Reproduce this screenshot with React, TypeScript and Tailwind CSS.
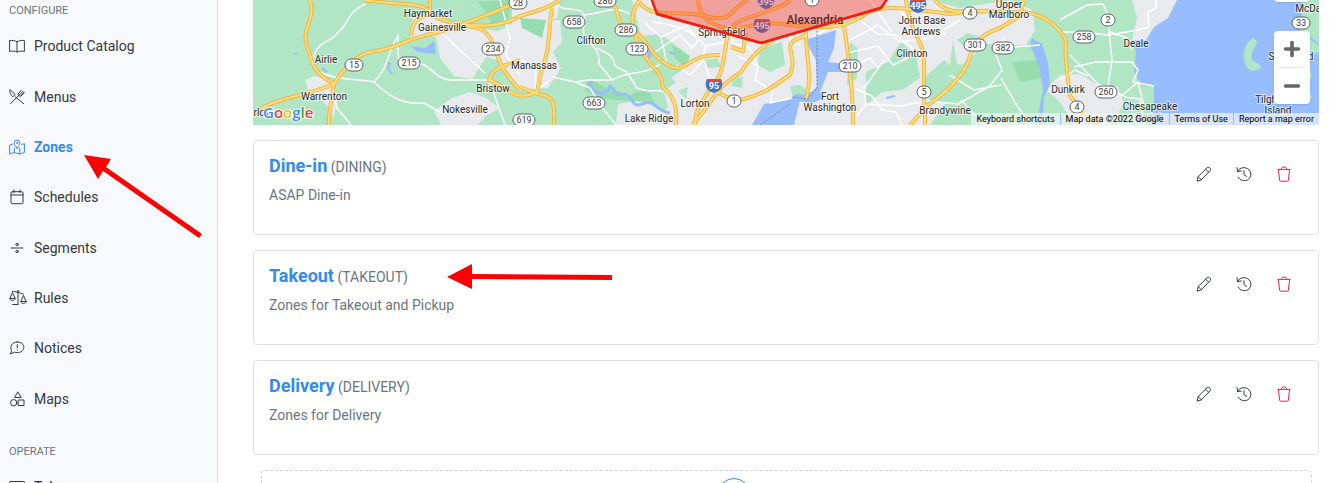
import type { ReactNode } from "react";
import { Minus, Plus } from "lucide-react";

const Icon = ({ children, size = 16 }: { children: ReactNode; size?: number }) => (
  <svg
    width={size}
    height={size}
    viewBox="0 0 16 16"
    fill="none"
    stroke="currentColor"
    strokeLinecap="round"
    strokeLinejoin="round"
    className="shrink-0"
    aria-hidden="true"
  >
    {children}
  </svg>
);

const BookIcon = () => (
  <Icon>
    <path d="M8 3.8C6.3 2.6 3 2.1.6 2.6v10.8C3 12.9 6.3 13 8 14c1.7-1 5-1.1 7.4-.6V2.6C13 2.1 9.7 2.6 8 3.8V14" />
  </Icon>
);

const MenusIcon = () => (
  <Icon>
    <path d="M.8 1c-.3 2.500.7 4.700 3 6.800l2-2zM6 7.700l8.700 7M10.500 5.700 1.600 14.600M9.300 4.600c-.5 1.600.8 3.100 2.600 2.500l3.300-3.300M9.300 4.600l3-3.400M11 5.300l3-3" />
    <path d="M12 6.200 15 3.100" strokeWidth=".7" />
  </Icon>
);

const ZonesIcon = () => (
  <Icon>
    <path d="M8 9.200C6.500 7.300 5.200 5.600 5.200 3.900a2.800 2.800 0 0 1 5.600 0C10.800 5.600 9.500 7.300 8 9.200z" />
    <circle cx="8" cy="3.900" r=".6" />
    <path d="M3.800 5 .6 6.200v8.800l4.700-1.500 5.400 1.500 4.700-1.500V4.700l-2.700.7M5.300 9v4.500M10.700 9v6" />
  </Icon>
);

const SchedulesIcon = () => (
  <Icon>
    <rect x="2" y="2.700" width="12" height="12" rx="1.300" />
    <path d="M2 6h12M5 1v2.400M11 1v2.400" />
  </Icon>
);

const SegmentsIcon = () => (
  <Icon>
    <path d="M2 8h12" />
    <circle cx="8" cy="4.500" r="1.200" />
    <circle cx="8" cy="11.500" r="1.200" />
  </Icon>
);

const RulesIcon = () => (
  <svg width="18" height="16" viewBox="0 0 18 16" fill="none" stroke="currentColor" strokeLinejoin="round" className="-mr-0.5 shrink-0" aria-hidden="true">
    <path d="M3 1.600c2-.7 3.500.5 6 .8 2 .3 3.200 1 5.800 2M9 2v12.500M3.300 14.500H9.500" />
    <circle cx="9" cy="1.500" r="1" />
    <path d="M3.500 2.500.8 8.500h5.400zM.8 8.500c.5 2.700 4.900 2.700 5.400 0M14.500 5.500l-2.700 6h5.400zM11.800 11.500c.5 2.700 4.900 2.700 5.400 0" />
  </svg>
);

const NoticesIcon = () => (
  <Icon>
    <path d="M8.300 2c3.800 0 6.500 2.200 6.500 5.300s-2.700 5.300-6.500 5.300c-1 0-2-.2-2.900-.5L1.500 14l1.100-3.500C.6 7 2.600 2 8.300 2z" />
    <path d="M8.300 4.600v3.400M8.300 10v.2" />
  </Icon>
);

const MapsIcon = () => (
  <Icon>
    <path d="M9 1.200 12.200 6.500H5.900z" />
    <circle cx="4.700" cy="11.700" r="3.200" />
    <path d="M9.500 9h5.500v5.500H9.500z" />
  </Icon>
);

const TabsIcon = () => (
  <Icon>
    <rect x=".6" y="2.500" width="15" height="11" rx="1" />
  </Icon>
);

const EditIcon = () => (
  <Icon>
    <path d="M1.200 14.800l.9-4.200L11 1.800c1.900-1.700 4.700 1 3.100 3L5.300 13.700zM2.100 10.600l3.200 3.100M9.600 3.200l3.100 3.100" />
  </Icon>
);

const HistoryIcon = () => (
  <Icon>
    <path d="M1.700 5.300C4.500-1 14.900 1.200 14.900 8.300c0 7.200-9.800 8.700-12.700 2.800M1 1.600l.5 4 3.900-.6M8 4.700v3.900l2.700 1.900" />
  </Icon>
);

const TrashIcon = () => (
  <Icon>
    <path d="M2.400 3.400l1.200 10.800c.1.700.5 1 1.100 1h6.600c.6 0 1-.3 1.100-1l1.200-10.800M1.800 3.400h12.400M5.300 3.200C5.500 1.600 6.200 1 8 1s2.500.6 2.700 2.200" />
  </Icon>
);

const navItems = [
  { label: "Product Catalog", icon: <BookIcon /> },
  { label: "Menus", icon: <MenusIcon /> },
  { label: "Zones", icon: <ZonesIcon />, active: true },
  { label: "Schedules", icon: <SchedulesIcon /> },
  { label: "Segments", icon: <SegmentsIcon /> },
  { label: "Rules", icon: <RulesIcon /> },
  { label: "Notices", icon: <NoticesIcon /> },
  { label: "Maps", icon: <MapsIcon /> },
];

const zones = [
  { name: "Dine-in", code: "DINING", description: "ASAP Dine-in" },
  { name: "Takeout", code: "TAKEOUT", description: "Zones for Takeout and Pickup" },
  { name: "Delivery", code: "DELIVERY", description: "Zones for Delivery" },
];

const urban = [
  "M410 38L413 17L428 15L450 20L470 27L498 31L520 22L560 20L562 42L553 52L561 68L548 88L520 90L517 84L504 67L498 60L486 57L472 79L454 76L440 58L436 37L425 34z",
  "M305 80L315 76L331 80L337 96L334 118L329 108L318 96L309 92z",
  "M452 98L470 92L486 98L500 108L486 116L478 125H441L434 111z",
  "M494 0H560L557 18L520 30L498 22z",
  "M632 0H930L960 8L1010 0L1032 10L1035 30L1026 45L985 44L965 62L948 80L955 125H650L668 107L664 92L676 82L664 71L652 48L640 32z",
  "M618 104L642 100L668 112L680 125H616z",
  "M1060 75L1080 74L1096 84L1118 87L1124 105L1110 125H1074L1060 102L1046 90z",
  "M1240 98L1262 94L1286 100V125H1240z",
];

const parks = [
  "M466 0H512V24L488 28L466 26L462 12z",
  "M866 72L888 62L901 42L916 55L920 78L902 90L882 92L866 105z",
  "M922 80L944 60L950 65L953 40L957 64L976 66L1000 63L1005 90L990 125H930L945 103L924 98z",
  "M640 36L660 34L685 52L682 70L665 82L650 62z",
  "M760 48L782 42L785 65L770 72L758 65z",
  "M790 86L800 85L815 96L810 103L793 99z",
  "M957 40L968 33L984 38L985 51L970 52z",
  "M848 50L851 42L858 49L857 78L847 86z",
  "M678 91L688 87L686 99z",
  "M733 78L743 77L742 88L731 86z",
  "M430 0L450 2L446 12L432 10z",
  "M704 60L718 58L721 67L708 68z",
];

const darkParks = [
  "M478 2L510 0L509 18L492 26L486 12z",
  "M520 18L546 20L542 38L522 28z",
  "M588 78L606 88L630 95L647 88L655 103L620 100L596 98L585 90z",
  "M1012 62L1040 60L1042 78L1020 82z",
  "M672 45L690 56L686 68L676 59z",
];

const waters = [
  "M805 40L836 30L834 48L828 62L852 65L850 72L828 72L820 92L824 98L811 104L800 101L794 125H752L764 104L788 100L796 94L808 95L817 87L816 60z",
  "M1319 0V125H1149L1154 110V85L1142 86L1134 72L1136 52L1133 42L1140 24L1133 0z",
  "M1032 38L1042 44L1048 62L1050 84L1044 98L1042 125H1036L1043 90L1039 66L1030 45z",
  "M410 46L425 48L434 41L436 54L418 52z",
  "M647 45L652 56L648 60z",
];

const highways = [
  "M310 0C316 20 301 28 307 46S313 70 326 79L334 84C333 98 328 110 329 125",
  "M253 115C270 98 300 98 334 84C348 62 360 54 371 52C398 49 405 38 440 32C475 19 497 13 520 0",
  "M364 0C400 6 423 0 434 16C450 26 470 24 483 30C500 44 490 60 520 90",
  "M411 36C413 16 420 19 430 14V0",
  "M452 24C484 26 500 28 520 16C545 9 550 6 560 0",
  "M552 8C548 30 551 48 541 72L537 92C512 104 504 83 489 80C493 65 510 65 520 60",
  "M520 87L538 94C557 96 554 108 554 125",
  "M612 0C622 20 616 25 632 31C645 35 650 55 666 64C687 77 684 54 720 55",
  "M640 0C630 12 631 24 636 37C637 48 641 50 652 66C668 80 657 86 668 92C677 102 677 116 676 125",
  "M640 3C653 20 678 9 705 16C733 24 728 10 748 0",
  "M698 0C701 26 718 24 732 31C754 23 771 22 790 25C825 29 840 28 860 18C878 1 914 10 950 14C989 7 1005 14 1024 12C1044 14 1060 28 1066 40C1064 60 1069 84 1070 96L1080 108C1080 118 1092 121 1100 125",
  "M790 0C777 13 740 15 730 29C722 48 727 75 710 88C704 103 696 104 695 125",
  "M710 88C725 97 729 99 744 99C768 93 781 80 790 75C800 50 776 45 805 36",
  "M731 47L743 51L746 33M692 125C712 105 714 88 740 73C752 55 764 45 774 40",
  "M806 30C805 52 813 76 806 99M844 26C849 58 853 98 853 125",
  "M906 0C909 28 920 38 923 52C926 68 922 90 925 107V125M910 125L928 105C950 90 968 70 970 55C978 38 985 33 1000 28L1020 16L1024 0",
  "M935 0C950 18 965 8 985 12",
];

const localRoads = [
  "M366 4C345 12 352 24 331 39C315 46 309 58 317 71C340 82 357 78 374 82C390 65 385 58 398 35C398 58 396 65 410 66C430 57 430 78 450 80L489 80L505 125",
  "M374 82C389 96 402 105 424 103L440 112M489 77L497 69L520 63M438 30L459 49L485 73M331 80L337 108L351 125",
  "M500 0L510 38L506 55L520 75M520 60L535 65L536 90L550 80",
  "M550 0C568 18 584 0 585 22C577 45 601 40 599 64L612 80C627 70 644 76 660 64",
  "M584 15C610 12 613 5 630 14M597 48C627 62 602 62 627 72L637 88C650 94 652 88 664 92",
  "M553 77L575 82L590 88L600 105L616 125M575 82L588 80L612 80",
  "M645 23L661 37L685 26L706 46L734 40M661 37L667 64M652 22C680 25 690 30 706 46L702 60",
  "M655 52L680 35L692 48L711 25M691 20L728 41L750 48L758 66",
  "M676 65L690 75L704 60L714 92M738 56L758 66L755 80L773 91L770 103L792 98",
  "M790 40L800 45M812 37L831 27L847 24M850 40L878 25L900 42L930 38L960 20",
  "M860 20L878 34L896 35L917 52M870 0L892 32M900 10L920 30L946 34",
  "M847 53L878 46L893 65L920 52M884 60L864 88L866 104L850 125M866 104L901 106L926 101M926 101L958 104L990 86L1002 70L996 55L1004 38",
  "M950 75L974 90L1001 85M961 100L985 125M1001 78L1016 104L1030 125M1000 48L1040 45",
  "M853 66L870 58L878 68M854 88L872 96L882 110L896 112L902 125",
  "M1060 20L1087 5L1103 4L1110 20L1109 32L1112 60L1108 86M1060 32L1080 32L1108 35L1138 30L1149 27L1148 12L1156 8V0",
  "M1070 55L1098 84M1074 67L1096 62L1132 62L1138 70L1133 82L1154 86M1120 97L1138 82L1144 106M1098 84L1124 96",
  "M1060 80L1075 70L1088 76M1124 97L1140 99L1144 125M1110 32L1127 38L1132 50",
];

// [x, y, label]
const routes: [number, number, string][] = [
  [354, 65, "15"], [409, 63, "215"], [493, 49, "234"], [518, 3, "28"], [574, 22, "658"], [605, 1, "286"],
  [626, 30, "286"], [637, 49, "123"], [594, 103, "663"], [524, 120, "619"], [734, 101, "1"], [850, 66, "210"],
  [970, 13, "4"], [975, 45, "301"], [1003, 48, "382"], [924, 92, "5"], [1108, 20, "2"], [1084, 37, "258"],
  [1106, 92, "260"], [1077, 107, "4"], [1301, 23, "33"], [812, 0, "1"],
];

const interstates: [number, number, string][] = [
  [714, 85, "95"], [762, 25, "495"], [766, 1, "395"], [918, 5, "495"],
];

const places: [number, number, string][] = [
  [428, 17, "Haymarket"], [442, 31, "Gainesville"], [326, 63, "Airlie"], [324, 100, "Warrenton"],
  [493, 92, "Bristow"], [465, 113, "Nokesville"], [591, 44, "Clifton"], [534, 69, "Manassas"],
  [695, 107, "Lorton"], [649, 122, "Lake Ridge"], [722, 36, "Springfield"],
  [922, 24, "Joint Base"], [921, 35, "Andrews"], [912, 57, "Clinton"], [830, 100, "Fort"], [830, 111, "Washington"],
  [945, 114, "Brandywine"], [1009, 8, "Upper"], [1009, 18, "Marlboro"], [1136, 47, "Deale"],
  [1068, 93, "Dunkirk"], [1150, 110, "Chesapeake"], [1150, 121, "Beach"], [1291, 60, "Sherwood"],
  [1276, 103, "Tilghman"], [1278, 114, "Island"], [1316, 12, "McDaniel"], [256, 116, "Marlow"],
];

const MapDrawing = () => (
  <svg viewBox="253 0 1066 125" preserveAspectRatio="xMinYMid slice" className="h-full w-full" aria-label="Zone map">
    <rect x="253" width="1066" height="125" fill="#b0e6c4" />
    <g fill="#e8eaed">{urban.map((d) => <path key={d} d={d} />)}</g>
    <g fill="#aee5c2">{parks.map((d) => <path key={d} d={d} />)}</g>
    <g fill="#95dcae">{darkParks.map((d) => <path key={d} d={d} />)}</g>
    <g fill="#98bdff">{waters.map((d) => <path key={d} d={d} />)}</g>
    <path d="M1132 0H1177L1168 18L1154 27L1146 40L1132 40L1137 18z" fill="#e8eaed" />
    <path d="M589 80C593 95 604 98 610 86C619 92 611 96 625 94C636 100 630 109 645 103C655 100 656 111 670 113" fill="none" stroke="#98bdff" strokeWidth="3" />
    <path d="M1254 38C1240 44 1242 66 1251 71L1261 69L1260 65L1252 60C1249 51 1258 46 1257 42z" fill="#b0e6c4" />
    <path d="M1302 0H1319V52L1308 56L1312 78L1303 76L1312 98L1298 104L1305 88L1297 70L1305 48L1296 40L1302 24z" fill="#b0e6c4" />
    <path d="M1310 38L1319 45M1306 63L1319 58M1310 85L1319 92" fill="none" stroke="#98bdff" strokeWidth="2" />
    <path d="M386 62l4 2-2 4 4 6M322 68l5 4M341 74l-2 5M295 53l2 1M886 98l9-2M670 52l6 3" fill="none" stroke="#98bdff" strokeWidth="2" />
    <g fill="none" stroke="#fff" strokeWidth="1.500" strokeLinejoin="round">
      {localRoads.map((d) => <path key={d} d={d} />)}
    </g>
    <g fill="none" stroke="#f3b63a" strokeWidth="4" strokeLinejoin="round">
      {highways.map((d) => <path key={d} d={d} />)}
    </g>
    <g fill="none" stroke="#fddc80" strokeWidth="2" strokeLinejoin="round">
      {highways.map((d) => <path key={d} d={d} />)}
    </g>
    <path d="M817 20V88L808 99L792 97M760 125L790 104" fill="none" stroke="#7c8497" strokeDasharray="2 1.500" />
    {/* Delivery zone outline */}
    <path d="M650 -5L657 14L761 43L881 8L890 -5z" fill="#ff2a18" fillOpacity=".38" stroke="#f41e0b" strokeWidth="2.500" />
    <g fontFamily="Roboto, sans-serif" fontSize="9" textAnchor="middle">
      {routes.map(([x, y, label], i) => (
        <g key={i}>
          <rect x={x - 5 - label.length * 2} y={y - 6} width={10 + label.length * 4} height="12" rx="6" fill="#fff" stroke="#5f6368" />
          <text x={x} y={y + 3} fill="#3c4043">{label}</text>
        </g>
      ))}
      {interstates.map(([x, y, label], i) => (
        <g key={i}>
          <path d={`M${x - 7} ${y - 6}h14c3 6 1 12-7 14c-8-2-10-8-7-14z`} fill={y === 85 || x === 918 ? "#3f74c8" : "#7a5a94"} />
          <path d={`M${x - 7} ${y - 6}h14v2h-14z`} fill="#d64b45" />
          <text x={x} y={y + 4} fill={y === 85 || x === 918 ? "#fff" : "#f5b5b5"} fontWeight="700">{label}</text>
        </g>
      ))}
    </g>
    <g fontFamily="Roboto, sans-serif" fontSize="10" textAnchor="middle" fill="#25282c" stroke="#fff" strokeOpacity=".6" strokeWidth="2" paintOrder="stroke">
      {places.map(([x, y, label]) => <text key={label} x={x} y={y}>{label}</text>)}
    </g>
    <text x="815" y="24" fontFamily="Roboto, sans-serif" fontSize="12" fontWeight="500" textAnchor="middle" fill="#5a2a2a">Alexandria</text>
    <path d="M657 14L761 43L881 8" fill="none" stroke="#f41e0b" strokeWidth="2.500" />
    <text x="263" y="118" fontFamily="'Open Sans', sans-serif" fontSize="15" fontWeight="600" stroke="#fff" strokeWidth="2" paintOrder="stroke">
      <tspan fill="#4285f4">G</tspan><tspan fill="#ea4335">o</tspan><tspan fill="#fbbc04">o</tspan><tspan fill="#4285f4">g</tspan><tspan fill="#34a853">l</tspan><tspan fill="#ea4335">e</tspan>
    </text>
  </svg>
);

const ZoneMap = () => (
  <div className="relative h-[125px] overflow-hidden bg-[#b0e6c4]">
    <MapDrawing />
    <div className="absolute -top-9 right-[9px] h-[38px] w-9 rounded-sm bg-white shadow" />
    <div className="absolute top-[31px] right-[9px] flex w-9 flex-col items-center rounded-sm bg-white text-[#666] shadow">
      <button type="button" aria-label="Zoom in" className="flex h-9 w-full items-center justify-center">
        <Plus size={22} strokeWidth={4} />
      </button>
      <span className="h-px w-7 bg-[#e6e6e6]" />
      <button type="button" aria-label="Zoom out" className="flex h-9 w-full items-center justify-center">
        <Minus size={22} strokeWidth={4} />
      </button>
    </div>
    <div className="absolute right-0 bottom-0 flex h-3 divide-x divide-[#98bdff] bg-[#f5f5f5]/70 text-[9px] leading-3 text-black">
      <button type="button" className="px-[5px]">Keyboard shortcuts</button>
      <span className="px-[5px]">Map data ©2022 Google</span>
      <a href="#terms" className="px-[5px]">Terms of Use</a>
      <a href="#report" className="px-[5px]">Report a map error</a>
    </div>
  </div>
);

const Sidebar = () => (
  <aside className="w-[218px] shrink-0 border-r border-[#dee2e6] bg-[#f8f9fc] text-sm text-[#343a40]">
    <h2 className="h-[21px] px-[9px] text-[11px] leading-[21px] text-[#6c757d]">CONFIGURE</h2>
    <nav className="grid h-[403px] grid-rows-8 px-[9px]">
      {navItems.map(({ label, icon, active }) => (
        <a key={label} href="#" className={active ? "flex items-center gap-[9px] font-bold text-[#318ceb]" : "flex items-center gap-[9px]"}>
          {icon}
          {label}
        </a>
      ))}
    </nav>
    <h2 className="mt-[17px] h-[21px] px-[9px] text-[11px] leading-[21px] text-[#6c757d]">OPERATE</h2>
    <a href="#" className="flex h-[50px] items-center gap-[9px] px-[9px]">
      <TabsIcon />
      Tabs
    </a>
  </aside>
);

const ZoneCard = ({ name, code, description }: { name: string; code: string; description: string }) => (
  <article className="flex h-[95px] justify-between rounded border border-[#dee2e6] px-[15px] pt-[11px]">
    <div className="text-sm text-[#6c757d]">
      <h3 className="h-[27px] leading-[27px]">
        <a href="#" className="text-lg font-bold text-[#318ceb]">{name}</a> ({code})
      </h3>
      <p className="mt-1.5 leading-5">{description}</p>
    </div>
    <div className="flex h-11 items-center gap-6 pr-[11px] text-[#343a40]">
      <button type="button" aria-label={`Edit ${name}`}><EditIcon /></button>
      <button type="button" aria-label={`History of ${name}`}><HistoryIcon /></button>
      <button type="button" aria-label={`Delete ${name}`} className="text-[#e0244f]"><TrashIcon /></button>
    </div>
  </article>
);

export default function App() {
  return (
    <div className="relative flex h-screen overflow-hidden bg-white font-[Roboto,sans-serif]">
      <Sidebar />
      <main className="min-w-0 flex-1 pr-[11px] pl-[35px]">
        <ZoneMap />
        <section className="mt-[15px] flex flex-col gap-[15px]">
          {zones.map((zone) => <ZoneCard key={zone.code} {...zone} />)}
          <button type="button" aria-label="Add zone" className="mr-[7px] ml-2 flex h-20 justify-center rounded border border-dashed border-[#ced4da] pt-[7px]">
            <span className="mr-[106px] flex size-8 items-center justify-center rounded-full border border-[#318ceb] text-[#318ceb]">
              <Plus size={18} />
            </span>
          </button>
        </section>
      </main>

      {/* Callout arrows */}
      <svg width="120" height="86" viewBox="0 0 120 86" className="pointer-events-none absolute top-[154px] left-[83px]" fill="#f00" aria-hidden="true">
        <path d="M1 1L28 5L23 13L119 80L116 84L20 17L15 25z" />
      </svg>
      <svg width="166" height="28" viewBox="0 0 166 28" className="pointer-events-none absolute top-[263px] left-[447px]" fill="#f00" aria-hidden="true">
        <path d="M0 14L25 1V11L165 12V17L25 16V26z" />
      </svg>
    </div>
  );
}
